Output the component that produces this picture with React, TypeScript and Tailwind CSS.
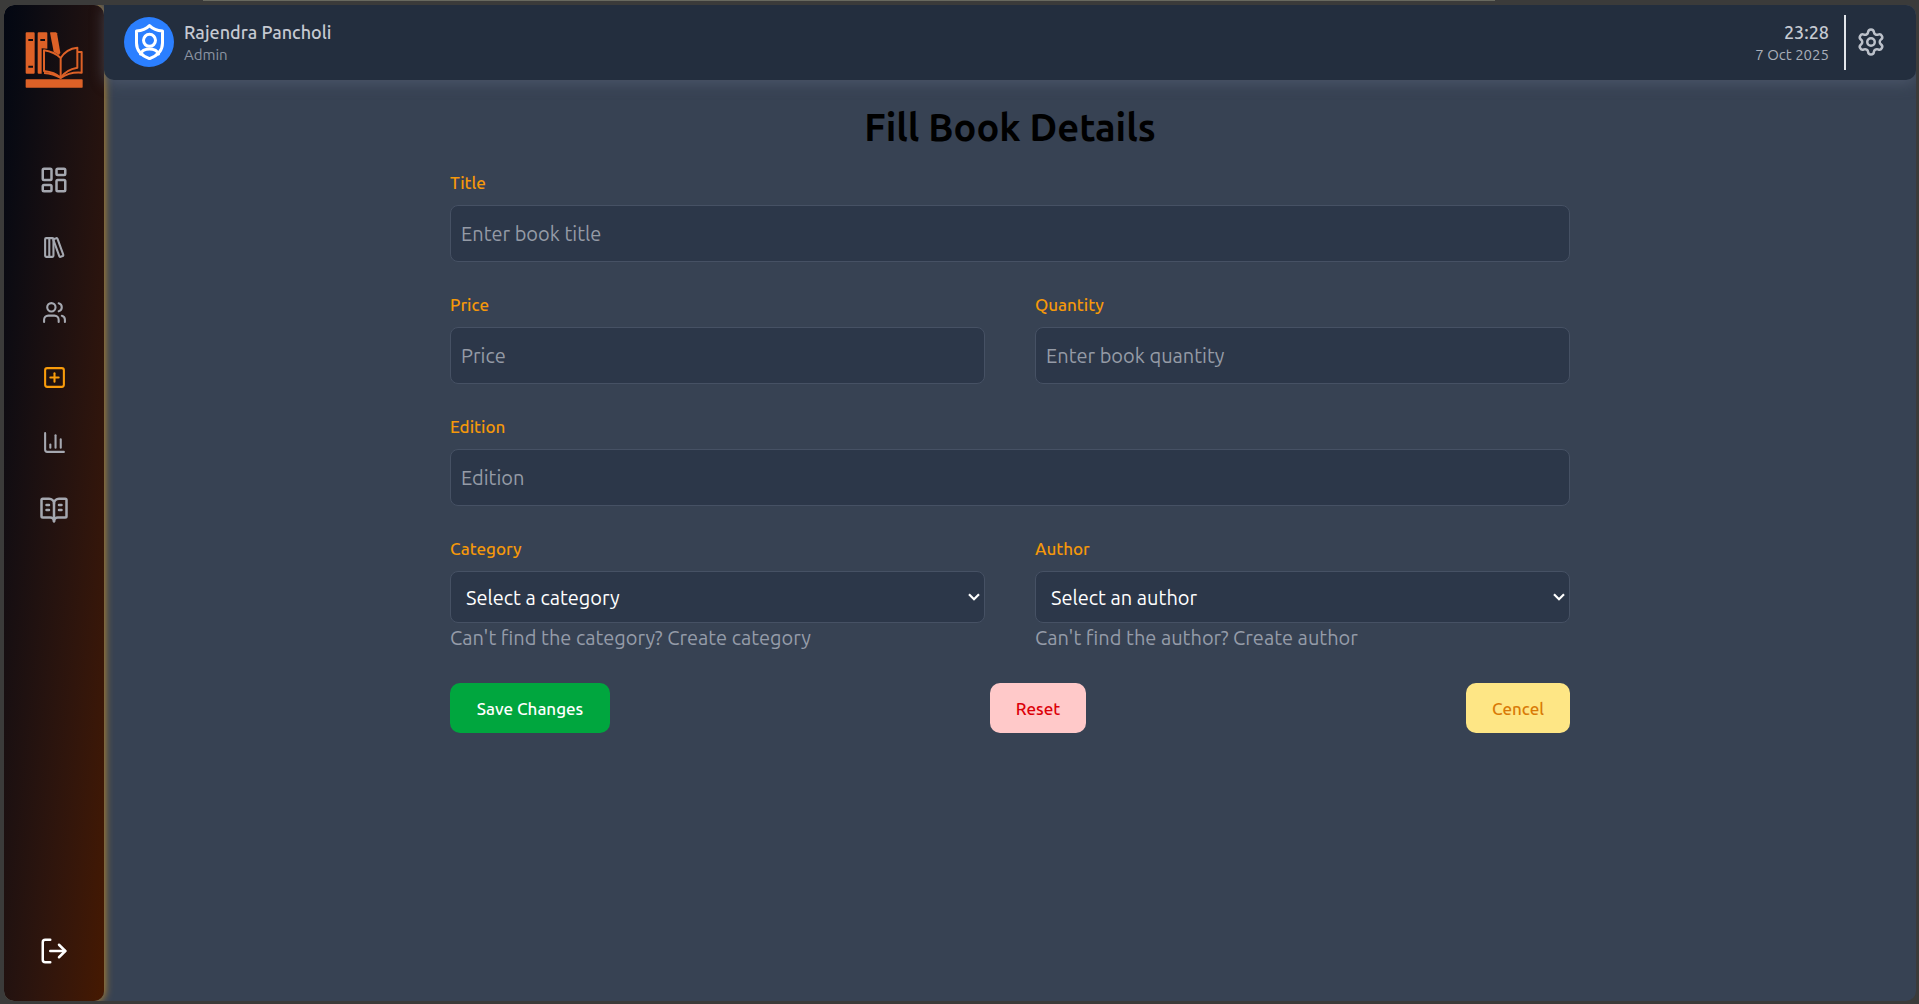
import React from "react";
import {
  BookOpenText,
  ChartColumn,
  LayoutDashboard,
  LibraryBig,
  LogOut,
  Settings,
  SquarePlus,
  Users,
} from "lucide-react";

const navItems = [
  { label: "Dashboard", Icon: LayoutDashboard, size: 30, active: false },
  { label: "Books", Icon: LibraryBig, size: 25, active: false },
  { label: "Members", Icon: Users, size: 25, active: false },
  { label: "Add book", Icon: SquarePlus, size: 25, active: true },
  { label: "Reports", Icon: ChartColumn, size: 25, active: false },
  { label: "Reading", Icon: BookOpenText, size: 30, active: false },
];

function Logo() {
  return (
    <svg viewBox="15 19 172 168" className="h-14 w-[58px]" aria-hidden="true">
      <g fill="#dd6127">
        <path
          fillRule="evenodd"
          d="M19 20h21a3 3 0 0 1 3 3v118a3 3 0 0 1-3 3H19a3 3 0 0 1-3-3V23a3 3 0 0 1 3-3zM24 40v6h14v-6zM24 120v6h14v-6z"
        />
        <path
          fillRule="evenodd"
          d="M55 20h23a3 3 0 0 1 3 3v46l-17-1v76h-9a3 3 0 0 1-3-3V23a3 3 0 0 1 3-3zM60 40v6h14v-6z"
        />
        <path d="M91 20h16l3 3 10 58-4 7-16-10-11-57z" />
        <rect x="16" y="161" width="171" height="25" rx="2" />
      </g>
      <g fill="none" stroke="#dd6127" strokeWidth="6" strokeLinejoin="round">
        <path d="M71 74C90 77 109 85 121 97V156C108 144 89 138 71 136Z" />
        <path d="M121 97C132 79 150 68 171 66V126C149 130 131 141 121 156" />
        <path d="M171 79H184V141C160 139 138 145 121 157C103 146 88 143 71 142" />
      </g>
    </svg>
  );
}

function AdminBadge() {
  return (
    <span className="flex size-[50px] items-center justify-center rounded-full bg-[#2b7fff]">
      <svg
        viewBox="42 37 92 108"
        className="h-9 w-[31px]"
        fill="none"
        stroke="white"
        strokeWidth="9"
        strokeLinecap="round"
        strokeLinejoin="round"
        aria-hidden="true"
      >
        <path d="M88 42C78 52 64 57 49 58V94C49 117 64 132 88 141C112 132 127 117 127 94V58C112 57 98 52 88 42Z" />
        <circle cx="88" cy="86" r="18" />
        <path d="M61 127C68 107 108 107 115 127" />
      </svg>
    </span>
  );
}

const labelClass = "block text-[17px] leading-[25px] font-medium text-[#f5980a]";
const controlClass =
  "block w-full rounded-lg border border-[#465164] bg-[#2c3749] text-[20px] leading-[30px]";

function TextField({ id, label, placeholder }: { id: string; label: string; placeholder: string }) {
  return (
    <div className="flex flex-col gap-2.5">
      <label htmlFor={id} className={labelClass}>
        {label}
      </label>
      <input
        id={id}
        type="text"
        placeholder={placeholder}
        className={`${controlClass} h-[57px] px-2.5 text-white placeholder:text-[#959ba6]`}
      />
    </div>
  );
}

function SelectField({
  id,
  label,
  option,
  question,
  link,
}: {
  id: string;
  label: string;
  option: string;
  question: string;
  link: string;
}) {
  return (
    <div>
      <label htmlFor={id} className={`${labelClass} mb-2.5`}>
        {label}
      </label>
      <div className="relative">
        <select id={id} className={`${controlClass} h-[52px] appearance-none px-[15px] pt-0.5 text-white`}>
          <option>{option}</option>
        </select>
        <svg
          viewBox="0 0 12 8"
          className="pointer-events-none absolute top-[22px] right-[5px] h-2 w-3"
          fill="none"
          stroke="white"
          strokeWidth="2.2"
          aria-hidden="true"
        >
          <path d="M1 1.2l5 5 5-5" />
        </svg>
      </div>
      <p className="text-[20px] leading-[30px] text-[#959ca9]">
        {question} <a href="#">{link}</a>
      </p>
    </div>
  );
}

const buttonClass = "h-[50px] rounded-[10px] text-center text-[17px] leading-[25px] font-medium";

export default function App() {
  return (
    <div className="flex min-h-screen flex-col bg-[#3b3b3a] pr-[3px] pb-[3px] pl-1 font-['Ubuntu','Noto_Sans',sans-serif]">
      <div className="h-[5px] pr-[22%] pl-[199px]">
        <div className="h-px bg-[#68695f]" />
      </div>
      <div className="flex flex-1 overflow-hidden rounded-[10px] bg-[#374253]">
        <aside className="flex w-[100px] shrink-0 flex-col items-center rounded-[10px] bg-linear-to-br from-gray-950 to-amber-950 pt-[27px] pb-[35px] shadow-[0_0_8px_1px_#b8862f]">
          <Logo />
          <nav className="mt-[77px] flex flex-col items-center gap-10">
            {navItems.map(({ label, Icon, size, active }) => (
              <a
                key={label}
                href="#"
                aria-label={label}
                className={active ? "text-[#f99c0b]" : "text-[#a5a8b0]"}
              >
                <Icon size={size} />
              </a>
            ))}
          </nav>
          <button type="button" aria-label="Log out" className="mt-auto text-white">
            <LogOut size={30} />
          </button>
        </aside>

        <div className="flex min-w-0 flex-1 flex-col">
          <header className="relative flex h-[75px] items-center justify-between rounded-[10px] rounded-tl-none bg-[#232e3e] pr-[30px] pb-px pl-5 shadow-[0_4px_14px_0_#56617599]">
            <div className="flex items-center gap-2.5">
              <AdminBadge />
              <div>
                <p className="text-[18px] leading-[25px] font-medium text-[#c6cad2]">Rajendra Pancholi</p>
                <p className="text-[15px] leading-5 text-[#8d95a3]">Admin</p>
              </div>
            </div>
            <div className="flex items-center">
              <div className="mr-[15px] text-right">
                <p className="text-[18px] leading-[25px] font-medium text-[#c6cad2]">23:28</p>
                <p className="text-[15px] leading-5 text-[#a9afba]">7 Oct 2025</p>
              </div>
              <div className="mr-2.5 h-[55px] w-0.5 bg-[#e2e5ea]" />
              <button type="button" aria-label="Settings" className="text-[#bcc1ca]">
                <Settings size={30} />
              </button>
            </div>
          </header>

          <main className="px-5 pt-[25px] pb-10">
            <form className="mx-auto max-w-[1120px]">
              <h1 className="mb-5 text-center text-[38px] leading-[45px] font-semibold text-black">
                Fill Book Details
              </h1>
              <div className="flex flex-col gap-[30px]">
                <TextField id="title" label="Title" placeholder="Enter book title" />
                <div className="grid grid-cols-2 gap-[50px]">
                  <TextField id="price" label="Price" placeholder="Price" />
                  <TextField id="quantity" label="Quantity" placeholder="Enter book quantity" />
                </div>
                <TextField id="edition" label="Edition" placeholder="Edition" />
                <div className="grid grid-cols-2 gap-[50px]">
                  <SelectField
                    id="category"
                    label="Category"
                    option="Select a category"
                    question="Can't find the category?"
                    link="Create category"
                  />
                  <SelectField
                    id="author"
                    label="Author"
                    option="Select an author"
                    question="Can't find the author?"
                    link="Create author"
                  />
                </div>
                <div className="flex justify-between">
                  <button type="submit" className={`${buttonClass} w-40 bg-[#00a63e] text-white`}>
                    Save Changes
                  </button>
                  <button type="reset" className={`${buttonClass} w-24 bg-[#ffc9c9] text-[#dc0008]`}>
                    Reset
                  </button>
                  <button type="button" className={`${buttonClass} w-[104px] bg-[#fee685] text-[#d97a06]`}>
                    Cencel
                  </button>
                </div>
              </div>
            </form>
          </main>
        </div>
      </div>
    </div>
  );
}
